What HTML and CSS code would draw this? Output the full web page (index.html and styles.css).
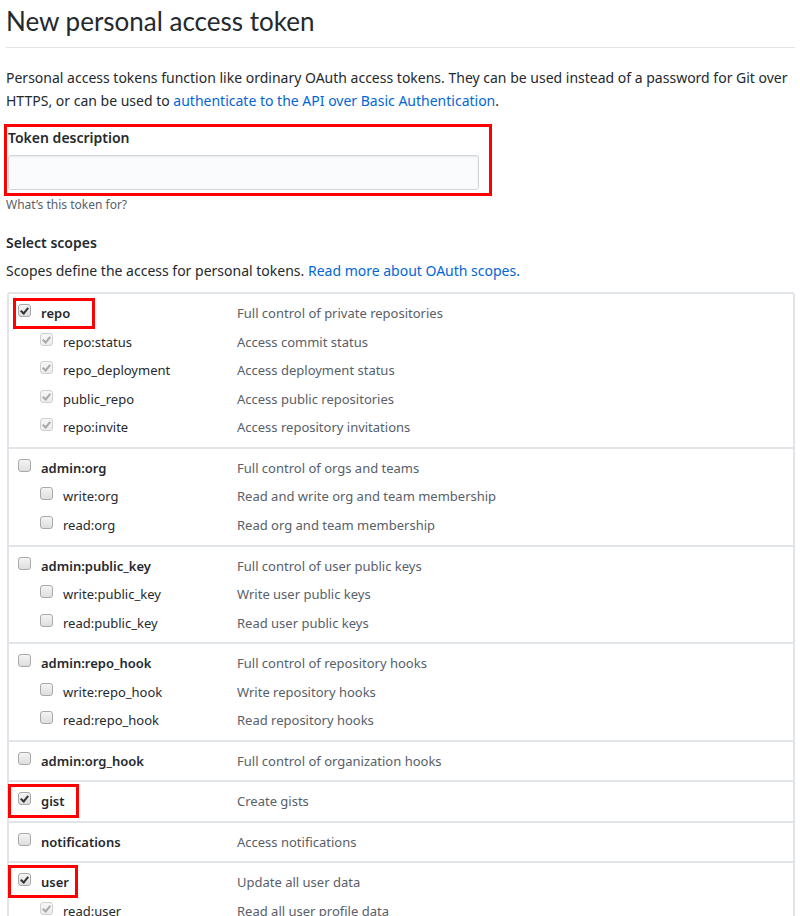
FILE: index.html
```html
<!DOCTYPE html>
<html lang="en">
    <head>
        <meta charset="UTF-8" />
        <title>New personal access token</title>
        <link rel="stylesheet" href="styles.css">
    </head>
    <body>
        <div class="page">
            <div class="subhead">
                <h1>New personal access token</h1>
            </div>

            <p class="intro">
                Personal access tokens function like ordinary OAuth access tokens. They can be used instead of a password for Git over
                HTTPS, or can be used to <a href="#">authenticate to the API over Basic Authentication</a>.
            </p>

            <div class="form-group marked">
                <label for="description">Token description</label>
                <input type="text" id="description" />
            </div>
            <p class="note">What’s this token for?</p>

            <h3>Select scopes</h3>
            <p class="scopes-intro">
                Scopes define the access for personal tokens. <a href="#">Read more about OAuth scopes.</a>
            </p>

            <div class="scopes">
                <div class="group">
                    <div class="row main">
                        <span class="name mark mark-repo"><span class="box checked"></span>repo</span>
                        <span class="desc">Full control of private repositories</span>
                    </div>
                    <div class="row sub">
                        <span class="name"><span class="box checked disabled"></span>repo:status</span>
                        <span class="desc">Access commit status</span>
                    </div>
                    <div class="row sub">
                        <span class="name"><span class="box checked disabled"></span>repo_deployment</span>
                        <span class="desc">Access deployment status</span>
                    </div>
                    <div class="row sub">
                        <span class="name"><span class="box checked disabled"></span>public_repo</span>
                        <span class="desc">Access public repositories</span>
                    </div>
                    <div class="row sub">
                        <span class="name"><span class="box checked disabled"></span>repo:invite</span>
                        <span class="desc">Access repository invitations</span>
                    </div>
                </div>

                <div class="group">
                    <div class="row main">
                        <span class="name"><span class="box"></span>admin:org</span>
                        <span class="desc">Full control of orgs and teams</span>
                    </div>
                    <div class="row sub">
                        <span class="name"><span class="box"></span>write:org</span>
                        <span class="desc">Read and write org and team membership</span>
                    </div>
                    <div class="row sub">
                        <span class="name"><span class="box"></span>read:org</span>
                        <span class="desc">Read org and team membership</span>
                    </div>
                </div>

                <div class="group">
                    <div class="row main">
                        <span class="name"><span class="box"></span>admin:public_key</span>
                        <span class="desc">Full control of user public keys</span>
                    </div>
                    <div class="row sub">
                        <span class="name"><span class="box"></span>write:public_key</span>
                        <span class="desc">Write user public keys</span>
                    </div>
                    <div class="row sub">
                        <span class="name"><span class="box"></span>read:public_key</span>
                        <span class="desc">Read user public keys</span>
                    </div>
                </div>

                <div class="group">
                    <div class="row main">
                        <span class="name"><span class="box"></span>admin:repo_hook</span>
                        <span class="desc">Full control of repository hooks</span>
                    </div>
                    <div class="row sub">
                        <span class="name"><span class="box"></span>write:repo_hook</span>
                        <span class="desc">Write repository hooks</span>
                    </div>
                    <div class="row sub">
                        <span class="name"><span class="box"></span>read:repo_hook</span>
                        <span class="desc">Read repository hooks</span>
                    </div>
                </div>

                <div class="group">
                    <div class="row main">
                        <span class="name"><span class="box"></span>admin:org_hook</span>
                        <span class="desc">Full control of organization hooks</span>
                    </div>
                </div>

                <div class="group">
                    <div class="row main">
                        <span class="name mark mark-gist"><span class="box checked"></span>gist</span>
                        <span class="desc">Create gists</span>
                    </div>
                </div>

                <div class="group">
                    <div class="row main">
                        <span class="name"><span class="box"></span>notifications</span>
                        <span class="desc">Access notifications</span>
                    </div>
                </div>

                <div class="group">
                    <div class="row main">
                        <span class="name mark mark-user"><span class="box checked"></span>user</span>
                        <span class="desc">Update all user data</span>
                    </div>
                    <div class="row sub">
                        <span class="name"><span class="box checked disabled"></span>read:user</span>
                        <span class="desc">Read all user profile data</span>
                    </div>
                </div>
            </div>
        </div>
    </body>
</html>
```

FILE: styles.css
```css
body {
    font-family: 'Noto Sans', 'Open Sans', 'Liberation Sans', sans-serif;
    font-size: 14px;
    color: #24292e;
    background: #fff;
    margin: 0;
}

a {
    color: #0366d6;
    text-decoration: none;
}

.page {
    padding: 0 6px;
    width: 789px;
}

/* heading */

.subhead {
    border-bottom: 1px solid #e1e4e8;
    height: 47px;
}

h1 {
    font-family: 'Lato', 'Noto Sans', sans-serif;
    font-size: 26px;
    font-weight: 400;
    margin: 0;
    line-height: 42px;
}

.intro {
    margin: 0;
    padding-top: 18px;
    line-height: 23px;
}

/* token description */

.form-group {
    margin: 12px 0 0 -2px;
    padding: 1px 10px 3px 1px;
    width: 471px;
}

.marked {
    border: 3px solid #f00;
}

.form-group label {
    display: block;
    font-weight: 600;
    line-height: 20px;
    margin-bottom: 7px;
}

.form-group input {
    display: block;
    width: 471px;
    height: 35px;
    box-sizing: border-box;
    margin: 0;
    background: #fafbfc;
    border: 1px solid #d1d5da;
    border-radius: 3px;
    box-shadow: inset 0 1px 2px rgba(27, 31, 35, 0.075);
}

.note {
    margin: 0;
    font-size: 12px;
    color: #586069;
    line-height: 18px;
}

h3 {
    font-size: 14px;
    font-weight: 600;
    margin: 18px 0 0;
    line-height: 22px;
}

.scopes-intro {
    margin: 7px 0 0;
    line-height: 20px;
}

/* scopes table */

.scopes {
    margin: 11px 0 0 1px;
    border: 2px solid #e1e4e8;
    border-radius: 3px;
    font-size: 13px;
}

.group {
    border-top: 2px solid #e1e4e8;
    padding: 9px 0 8.5px;
}

.group:first-child {
    border-top: none;
}

.row {
    display: flex;
    align-items: center;
    height: 21px;
    line-height: 21px;
}

.row + .row {
    margin-top: 7.6px;
}

.name {
    display: flex;
    align-items: center;
    width: 228px;
    height: 21px;
    box-sizing: border-box;
}

.main .name {
    padding-left: 9px;
    font-weight: 600;
}

.sub .name {
    padding-left: 31px;
}

.desc {
    color: #586069;
}

.box {
    display: inline-block;
    width: 11px;
    height: 11px;
    border: 1px solid #a9a9a9;
    border-radius: 3px;
    background: linear-gradient(#f4f4f4, #dedede);
    margin-right: 10px;
    position: relative;
    top: -3px;
}

.checked::after {
    content: '';
    position: absolute;
    left: 3px;
    top: 1px;
    width: 3px;
    height: 6px;
    border: solid #333;
    border-width: 0 2px 2px 0;
    transform: rotate(40deg);
}

.disabled {
    border-color: #d0d0d0;
    background: linear-gradient(#f6f6f6, #ececec);
}

.disabled::after {
    border-color: #a8a8a8;
}

/* red highlight boxes */

.mark {
    position: relative;
}

.mark::before {
    content: '';
    position: absolute;
    border: 3px solid #f00;
    box-sizing: border-box;
}

.mark-repo::before {
    left: 4px;
    top: -5px;
    width: 82px;
    height: 31px;
}

.mark-gist::before {
    left: -1px;
    top: -7px;
    width: 71px;
    height: 34px;
}

.mark-user::before {
    left: -1px;
    top: -7px;
    width: 70px;
    height: 33px;
}
```
